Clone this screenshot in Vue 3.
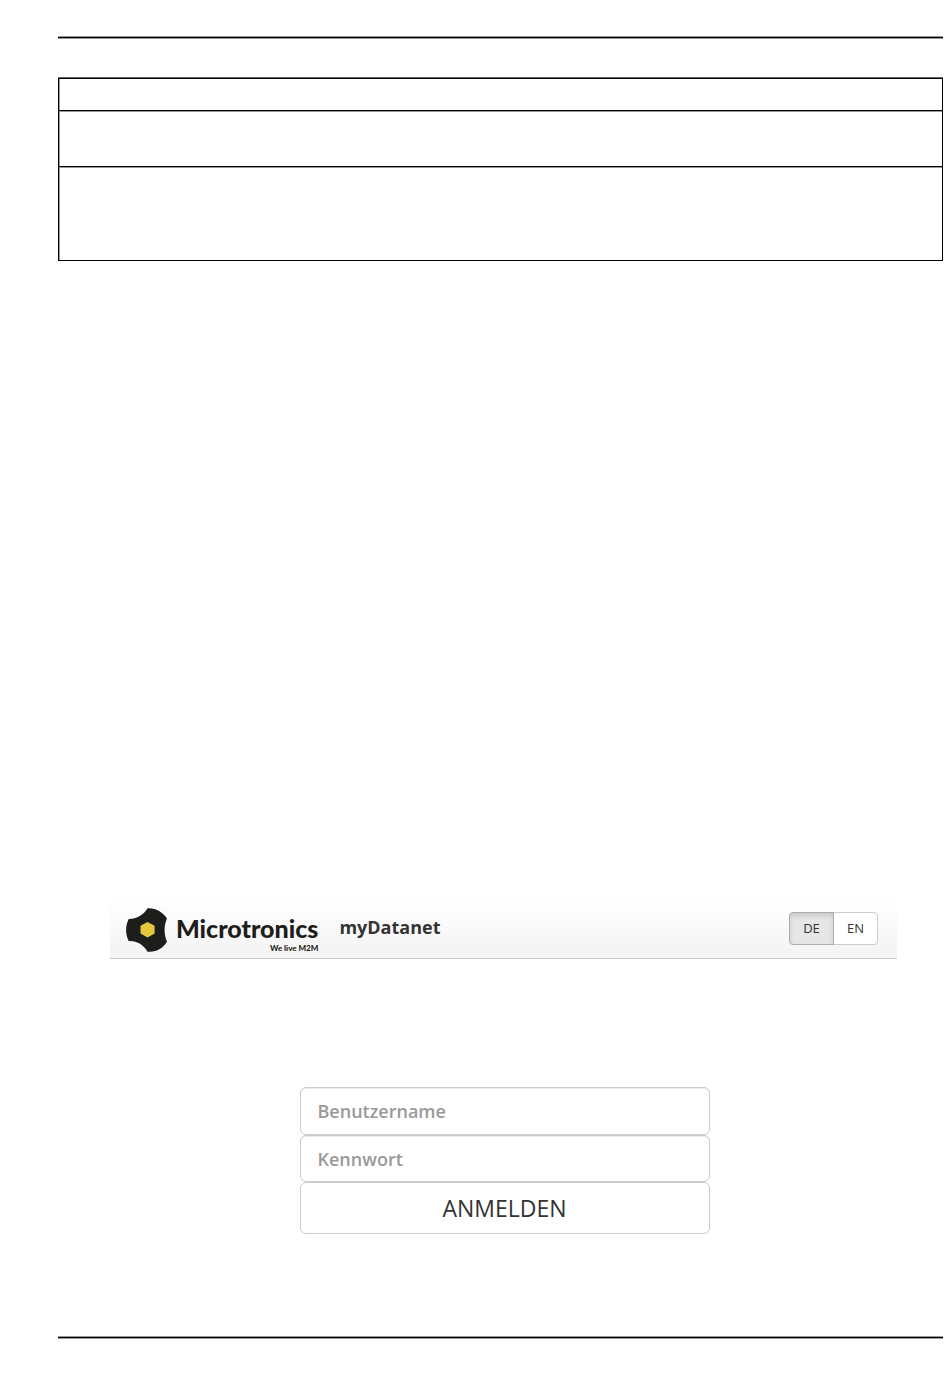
<template>
  <div class="page">
    <hr class="rule" />

    <table class="info-table">
      <tbody>
        <tr v-for="row in rows" :key="row" :class="row">
          <td></td>
        </tr>
      </tbody>
    </table>

    <main class="screen">
      <header class="navbar">
        <div class="brand">
          <svg class="brand-icon" viewBox="0 0 42 44" aria-hidden="true">
            <path
              d="M21.5 0.3C29 -0.4 36.5 3.8 41 10.5C37.8 17.5 37.8 26.5 41 33.8C36.6 40.6 30 44.6 21.5 43.7C17.5 36.7 11 32.6 2.8 33C-0.8 26.6 -0.8 17.6 2.8 11C11 10.8 17.5 7 21.5 0.3Z"
              fill="#1d1d1b"
            />
            <path d="M21.5 14L28.6 17.8V25.6L21.5 29.4L14.5 25.6V17.8Z" fill="#e3c83c" />
          </svg>
          <div class="brand-text">
            <span class="brand-name">Microtronics</span>
            <span class="brand-claim">We live M2M</span>
          </div>
        </div>
        <span class="product">myDatanet</span>

        <div class="lang-switch">
          <button
            v-for="code in languages"
            :key="code"
            type="button"
            class="lang-btn"
            :class="{ active: language === code }"
            @click="language = code"
          >
            {{ code }}
          </button>
        </div>
      </header>

      <form class="login" @submit.prevent>
        <input v-model="username" class="field" type="text" placeholder="Benutzername" aria-label="Benutzername" />
        <input v-model="password" class="field" type="password" placeholder="Kennwort" aria-label="Kennwort" />
        <button class="submit-btn" type="submit">ANMELDEN</button>
      </form>
    </main>

    <hr class="rule" />
  </div>
</template>

<script setup>
import { ref } from "vue";

const rows = ["row-small", "row-medium", "row-large"];
const languages = ["DE", "EN"];

const language = ref("DE");
const username = ref("");
const password = ref("");
</script>

<style>
body {
  background: #fff;
}
</style>

<style scoped>
.page {
  padding: 36px 7px 40px 58px;
  font-family: "Open Sans", "Noto Sans", sans-serif;
  color: #333;
}

.page *,
.page {
  box-sizing: border-box;
}

.rule {
  height: 3px;
  margin: 0;
  border: solid #999;
  border-width: 1px 0;
  background: #000;
}

/* empty description table */
.info-table {
  width: 100%;
  margin-top: 39px;
  border: 1px solid #000;
  border-spacing: 0;
  box-shadow: 0 -1px 0 #666, inset 1px 0 0 #999;
}

.info-table td {
  padding: 0;
  border-bottom: 1px solid #000;
}

.info-table tr + tr td {
  box-shadow: inset 0 1px 0 #999;
}

.info-table tr:last-child td {
  border-bottom: 0;
}

.row-small { height: 32px; }
.row-medium { height: 56px; }
.row-large { height: 93px; }

.screen {
  margin: 637px 46px 102px 52px;
}

.navbar {
  display: flex;
  align-items: flex-start;
  height: 61px;
  padding: 10px 19px 0 16px;
  border-bottom: 1px solid #c8c8c8;
  background: linear-gradient(#fff, #f3f3f3);
}

.brand {
  display: flex;
}

.brand-icon {
  width: 42px;
  height: 44px;
}

.brand-text {
  display: flex;
  flex-direction: column;
  align-items: flex-end;
  margin-left: 8px;
  padding-top: 5px;
  color: #1d1d1b;
  font-family: Lato, sans-serif;
  font-weight: 900;
}

.brand-name {
  font-size: 25px;
  line-height: 30px;
}

.brand-claim {
  font-size: 8px;
  line-height: 10px;
}

.product {
  margin-left: 21px;
  font-size: 18px;
  font-weight: 700;
  line-height: 38px;
}

.lang-switch {
  display: flex;
  margin-left: auto;
  padding-top: 4px;
}

.lang-btn {
  width: 45px;
  height: 33px;
  padding: 0 0 2px;
  border: 1px solid #ccc;
  border-radius: 0 4px 4px 0;
  background: #fff;
  color: #333;
  font-family: inherit;
  font-size: 13px;
  cursor: pointer;
}

.lang-btn:first-child {
  border-radius: 4px 0 0 4px;
}

.lang-btn + .lang-btn {
  margin-left: -1px;
}

.lang-btn.active {
  position: relative;
  border-color: #adadad;
  background: #e6e6e6;
  box-shadow: inset 0 3px 5px rgba(0, 0, 0, 0.125);
}

.login {
  display: flex;
  flex-direction: column;
  max-width: 412px;
  margin: 128px auto 0;
  padding-left: 2px;
}

.field {
  height: 48px;
  padding: 0 17px;
  border: 1px solid #ccc;
  border-radius: 6px;
  background: #fff;
  box-shadow: inset 0 1px 1px rgba(0, 0, 0, 0.075);
  color: #333;
  font-family: inherit;
  font-size: 18px;
  font-weight: 600;
}

.field + .field {
  height: 47px;
}

.field::placeholder {
  color: #999;
  opacity: 1;
}

.submit-btn {
  height: 52px;
  border: 1px solid #ccc;
  border-radius: 6px;
  background: #fff;
  color: #333;
  font-family: inherit;
  font-size: 23px;
  cursor: pointer;
}
</style>
